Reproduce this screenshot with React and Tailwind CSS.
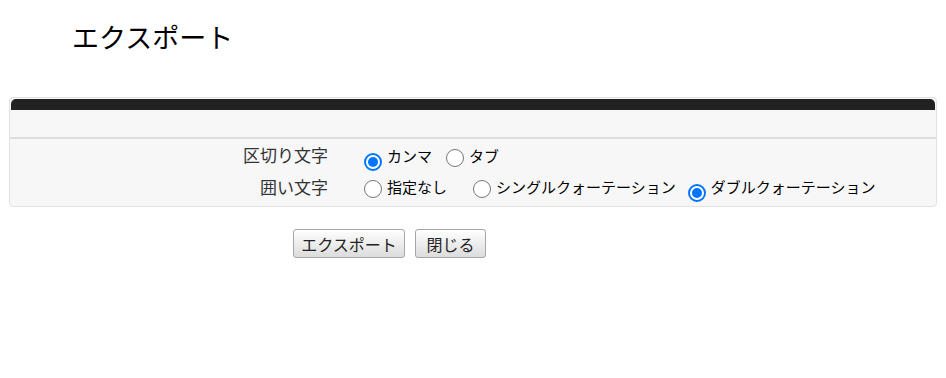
import React, { useState } from 'react';

const jp = { fontFamily: '"Noto Sans CJK JP", "Noto Sans", sans-serif' };

const Radio = ({ checked, onClick }) => (
  <span
    onClick={onClick}
    className={`inline-flex items-center justify-center w-[18px] h-[18px] rounded-full bg-white shrink-0 cursor-pointer ${
      checked ? 'border-2 border-[#0075ff]' : 'border border-[#767676]'
    }`}
  >
    {checked && <span className="block w-[10px] h-[10px] rounded-full bg-[#0075ff]" />}
  </span>
);

const Option = ({ label, checked, onClick, className = '' }) => (
  <label className={`flex items-center gap-[5px] cursor-pointer ${className}`} onClick={onClick}>
    <span className="pt-[9px]">
      <Radio checked={checked} />
    </span>
    <span className="text-[15px] text-black leading-none">{label}</span>
  </label>
);

function App() {
  const [sep, setSep] = useState('comma');
  const [quote, setQuote] = useState('double');

  return (
    <div className="min-h-screen bg-white" style={jp}>
      <h1 className="pl-[72px] pt-[16px] h-[97px] text-[27px] leading-[42px] font-normal text-black">
        エクスポート
      </h1>

      <div className="mx-[9px] border border-[#e2e2e2] rounded-[4px] bg-[#f7f7f7] p-px">
        <div className="h-[11px] bg-[#222222] rounded-t-[5px]" />
        <div className="h-[27px]" />
        <div className="h-[2px] bg-[#dddddd] -mx-px" />
        <div className="grid grid-cols-[317px_1fr] gap-x-[36px] pt-[2px] pb-[1px]">
          <div className="text-right text-[17px] text-[#333] leading-[28px]">区切り文字</div>
          <div className="flex items-center h-[28px]">
            <Option label="カンマ" checked={sep === 'comma'} onClick={() => setSep('comma')} />
            <Option label="タブ" className="ml-[14px]" checked={sep === 'tab'} onClick={() => setSep('tab')} />
          </div>
          <div className="text-right text-[17px] text-[#333] leading-[35px]">囲い文字</div>
          <div className="flex items-center h-[35px]">
            <Option label="指定なし" checked={quote === 'none'} onClick={() => setQuote('none')} />
            <Option label="シングルクォーテーション" className="ml-[26px]" checked={quote === 'single'} onClick={() => setQuote('single')} />
            <Option label="ダブルクォーテーション" className="ml-[12px]" checked={quote === 'double'} onClick={() => setQuote('double')} />
          </div>
        </div>
      </div>

      <div className="flex gap-[10px] pl-[293px] pt-[22px]">
        <button className="w-[112px] h-[29px] border border-[#a6a6a6] rounded-[3px] bg-gradient-to-b from-white to-[#dcdcdc] text-[16px] text-[#222] leading-none">
          エクスポート
        </button>
        <button className="w-[71px] h-[29px] border border-[#a6a6a6] rounded-[3px] bg-gradient-to-b from-white to-[#dcdcdc] text-[16px] text-[#222] leading-none">
          閉じる
        </button>
      </div>
    </div>
  );
}

export default App;
